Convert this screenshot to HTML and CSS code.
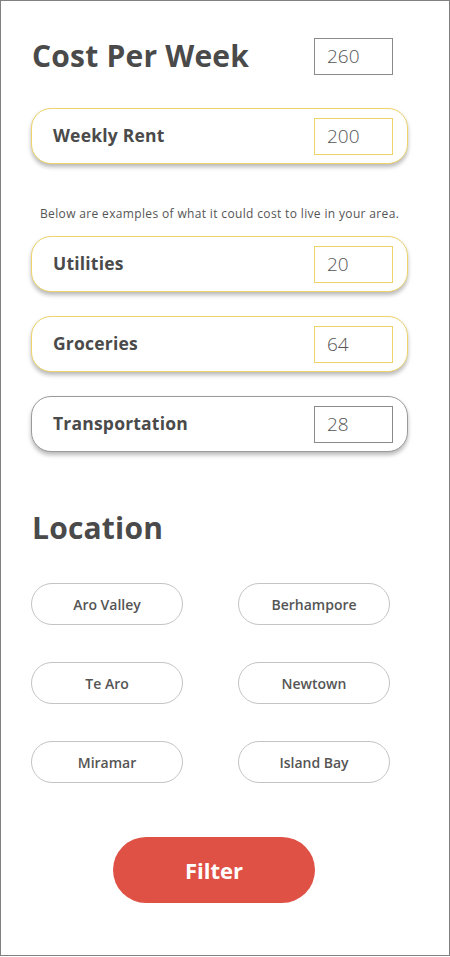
FILE: index.html
```html
<!DOCTYPE html>
<html>
<head>
<meta charset="utf-8">
<link rel="stylesheet" href="styles.css">
</head>
<body>
<div class="frame">
  <div class="content">
    <div class="header">
      <h1 class="title">Cost Per Week</h1>
      <div class="num num-gray">260</div>
    </div>

    <div class="card card-yellow card-first">
      <span class="label">Weekly Rent</span>
      <div class="num num-yellow">200</div>
    </div>

    <p class="caption">Below are examples of what it could cost to live in your area.</p>

    <div class="cards">
      <div class="card card-yellow">
        <span class="label">Utilities</span>
        <div class="num num-yellow">20</div>
      </div>
      <div class="card card-yellow">
        <span class="label">Groceries</span>
        <div class="num num-yellow">64</div>
      </div>
      <div class="card card-gray">
        <span class="label">Transportation</span>
        <div class="num num-gray">28</div>
      </div>
    </div>

    <h2 class="title location">Location</h2>

    <div class="pills">
      <div class="pill">Aro Valley</div>
      <div class="pill">Berhampore</div>
      <div class="pill">Te Aro</div>
      <div class="pill">Newtown</div>
      <div class="pill">Miramar</div>
      <div class="pill">Island Bay</div>
    </div>

    <button class="filter">Filter</button>
  </div>
</div>
</body>
</html>
```
FILE: styles.css
```css
* { box-sizing: border-box; }
html, body { margin: 0; padding: 0; background: #fff; }
body { font-family: "Open Sans", "Noto Sans", sans-serif; color: #4a4a4a; }

.frame {
  width: 450px;
  height: 956px;
  border: 1px solid #808080;
  overflow: hidden;
}
.content {
  width: 377px;
  margin-left: 30px;
  padding-top: 37px;
}

.header {
  display: flex;
  justify-content: space-between;
  align-items: flex-start;
  padding: 0 15px 0 2px;
}
.title {
  margin: 0;
  font-size: 30px;
  font-weight: 700;
  line-height: 36px;
  color: #4a4a4a;
  letter-spacing: 0.2px;
}
.header .title { margin-left: -1px; }

.num {
  width: 79px;
  height: 37px;
  border: 1px solid #808080;
  font-size: 19px;
  font-weight: 300;
  line-height: 35px;
  padding-left: 12px;
  color: #555;
}
.num-gray { border-color: #8a8a8a; }
.num-yellow { border-color: #ecd36a; }

.card {
  height: 56px;
  border-radius: 20px;
  border: 1.5px solid #ecd36a;
  box-shadow: 0 3px 4px rgba(0, 0, 0, 0.28);
  display: flex;
  align-items: center;
  justify-content: space-between;
  padding: 0 14px 0 21px;
  background: #fff;
}
.card-first { margin-top: 33px; }
.card-gray { border-color: #9a9a9a; }
.label {
  font-size: 17.5px;
  font-weight: 700;
  color: #4a4a4a;
  margin-top: -2px;
  letter-spacing: 0.2px;
}
.card .num { margin-top: 1px; }

.caption {
  margin: 42px 0 0 9px;
  font-size: 12px;
  line-height: 16px;
  font-weight: 400;
  color: #555;
  letter-spacing: 0.35px;
  white-space: nowrap;
}

.cards {
  margin-top: 14px;
  display: flex;
  flex-direction: column;
  gap: 24px;
}

.location {
  margin-top: 58px;
  margin-left: 1px;
}

.pills {
  margin-top: 37px;
  display: grid;
  grid-template-columns: 152px 152px;
  column-gap: 55px;
  row-gap: 37px;
}
.pill {
  height: 42px;
  border: 1px solid #c4c4c4;
  border-radius: 21px;
  display: flex;
  align-items: center;
  justify-content: center;
  font-size: 14px;
  font-weight: 600;
  color: #555;
}

.filter {
  display: block;
  margin: 54px 0 0 82px;
  width: 202px;
  height: 66px;
  border: none;
  border-radius: 33px;
  background: #e05145;
  color: #fff;
  font-family: inherit;
  font-size: 22px;
  font-weight: 700;
  padding: 0;
}
```
